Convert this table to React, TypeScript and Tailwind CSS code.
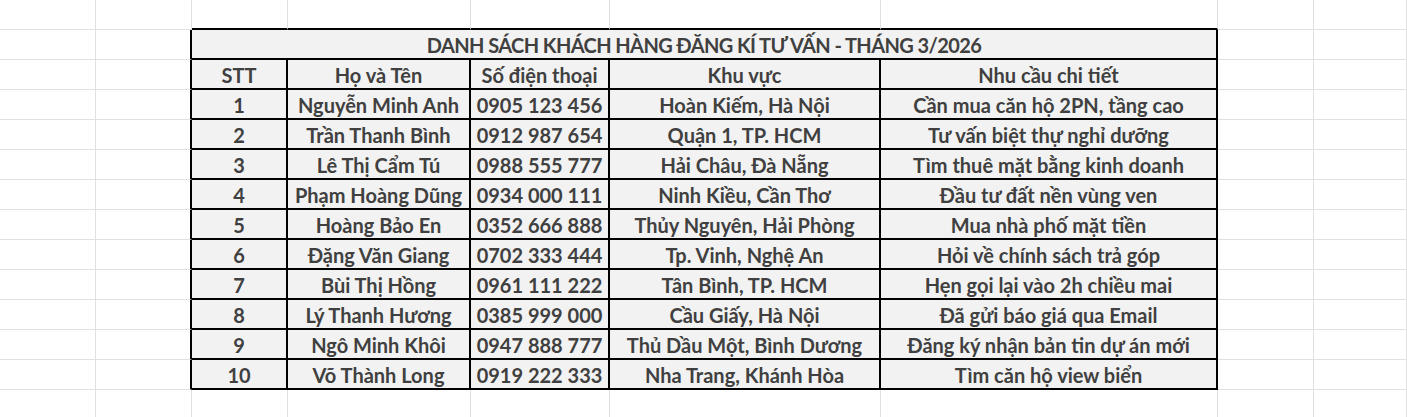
const title = 'DANH SÁCH KHÁCH HÀNG ĐĂNG KÍ TƯ VẤN - THÁNG 3/2026';

const headers = ['STT', 'Họ và Tên', 'Số điện thoại', 'Khu vực', 'Nhu cầu chi tiết'];

const customers = [
  ['1', 'Nguyễn Minh Anh', '0905 123 456', 'Hoàn Kiếm, Hà Nội', 'Cần mua căn hộ 2PN, tầng cao'],
  ['2', 'Trần Thanh Bình', '0912 987 654', 'Quận 1, TP. HCM', 'Tư vấn biệt thự nghỉ dưỡng'],
  ['3', 'Lê Thị Cẩm Tú', '0988 555 777', 'Hải Châu, Đà Nẵng', 'Tìm thuê mặt bằng kinh doanh'],
  ['4', 'Phạm Hoàng Dũng', '0934 000 111', 'Ninh Kiều, Cần Thơ', 'Đầu tư đất nền vùng ven'],
  ['5', 'Hoàng Bảo En', '0352 666 888', 'Thủy Nguyên, Hải Phòng', 'Mua nhà phố mặt tiền'],
  ['6', 'Đặng Văn Giang', '0702 333 444', 'Tp. Vinh, Nghệ An', 'Hỏi về chính sách trả góp'],
  ['7', 'Bùi Thị Hồng', '0961 111 222', 'Tân Bình, TP. HCM', 'Hẹn gọi lại vào 2h chiều mai'],
  ['8', 'Lý Thanh Hương', '0385 999 000', 'Cầu Giấy, Hà Nội', 'Đã gửi báo giá qua Email'],
  ['9', 'Ngô Minh Khôi', '0947 888 777', 'Thủ Dầu Một, Bình Dương', 'Đăng ký nhận bản tin dự án mới'],
  ['10', 'Võ Thành Long', '0919 222 333', 'Nha Trang, Khánh Hòa', 'Tìm căn hộ view biển'],
];

const ROWS = 14;
const COLS = 9;
const TABLE_FIRST_COL = 2;
const TABLE_LAST_COL = 6;

// empty sheet cell, with the table's outer border on the edges that touch it
function EmptyCell({ row, col }: { row: number; col: number }) {
  const inTableRows = row >= 1 && row <= 12;
  const inTableCols = col >= TABLE_FIRST_COL && col <= TABLE_LAST_COL;

  if (col === TABLE_FIRST_COL - 1 && inTableRows) {
    return <div className="border-r-2 border-r-black border-b border-b-[#e1e1e1]" />;
  }
  if (row === 0 && inTableCols) {
    return <div className="border-b-2 border-b-black border-r border-r-[#e1e1e1]" />;
  }
  return <div className="border-r border-b border-[#e1e1e1]" />;
}

function TableCell({ text }: { text: string }) {
  return (
    <div className="flex items-center justify-center pt-px border-r-2 border-b-2 border-black bg-[#f2f2f2] text-[20px] font-bold text-[#404040] whitespace-nowrap overflow-hidden">
      {text}
    </div>
  );
}

export default function App() {
  const tableRows = [headers, ...customers];
  const cells: React.ReactNode[] = [];

  for (let r = 0; r < ROWS; r++) {
    for (let c = 0; c < COLS; c++) {
      const isTableRow = r >= 1 && r <= 12;
      const isTableCol = c >= TABLE_FIRST_COL && c <= TABLE_LAST_COL;

      if (isTableRow && isTableCol) {
        if (r === 1) {
          // merged title row
          if (c === TABLE_FIRST_COL) {
            cells.push(
              <div
                key={`${r}-${c}`}
                className="col-span-5 flex items-center justify-center pt-px border-r-2 border-b-2 border-black bg-[#f2f2f2] text-[20px] font-bold tracking-[-0.6px] text-[#404040] whitespace-nowrap"
              >
                {title}
              </div>
            );
          }
          continue;
        }
        cells.push(<TableCell key={`${r}-${c}`} text={tableRows[r - 2][c - TABLE_FIRST_COL]} />);
        continue;
      }
      cells.push(<EmptyCell key={`${r}-${c}`} row={r} col={c} />);
    }
  }

  return (
    <div
      className="h-[417px] w-[1407px] overflow-hidden bg-white"
      style={{ fontFamily: 'Lato, "Noto Sans", "Liberation Sans", sans-serif' }}
    >
      <div className="grid grid-cols-[96px_96px_96px_183px_139px_271px_337px_96px_1fr] auto-rows-[30px]">
        {cells}
      </div>
    </div>
  );
}
